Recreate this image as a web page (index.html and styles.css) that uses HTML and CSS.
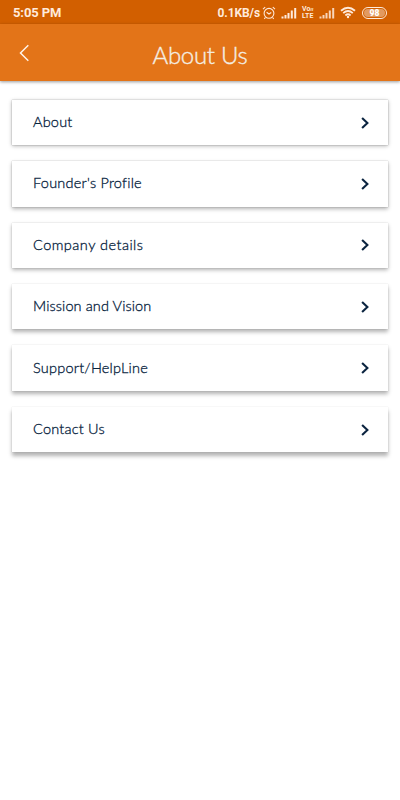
FILE: index.html
```html
<!DOCTYPE html>
<html lang="en">
<head>
<meta charset="utf-8">
<title>About Us</title>
<link rel="stylesheet" href="styles.css">
</head>
<body>
<div class="status">
  <span class="time">5:05 PM</span>
  <span class="rate">0.1KB/s</span>
  <svg class="alarm" width="14" height="14" viewBox="0 0 14 14"><circle cx="7" cy="7.3" r="4.9"/><path d="M1 3.2 3.2 1.2M10.8 1.2 13 3.2M3.4 11.5 2.3 12.8M10.6 11.5 11.7 12.8M4.6 6.2 7 8 9.3 6.5"/></svg>
  <svg class="signal" width="16" height="12" viewBox="0 0 16 12"><path d="M1.5 9.5V11.5M4.5 8V11.5M7.5 6V11.5M10.8 3.5V11.5M14.2 1V11.5"/></svg>
  <span class="volte"><span>Vo<i>ıı</i></span><span>LTE</span></span>
  <svg class="signal second" width="16" height="12" viewBox="0 0 16 12"><path d="M1.5 9.5V11.5M4.5 8V11.5M7.5 6V11.5M10.8 3.5V11.5M14.2 1V11.5"/></svg>
  <svg class="wifi" width="16" height="13" viewBox="0 0 16 13"><path d="M1 4.7Q8-1.3 15 4.7M3.2 7.1Q8 3 12.8 7.1M5.4 9.4Q8 7.3 10.6 9.4"/><circle cx="8" cy="11" r="1.2"/></svg>
  <span class="battery"><b>98</b></span>
</div>
<header class="bar">
  <svg class="back" width="12" height="20" viewBox="0 0 12 20"><path d="M9.3 2.2 1.5 10 9.3 17.8"/></svg>
  <h1>About Us</h1>
</header>
<main class="list">
  <a class="card c1"><span class="about">About</span><svg class="chev" width="10" height="14" viewBox="0 0 10 14"><path d="M2.1 1.9 7.4 7 2.1 12.1"/></svg></a>
  <a class="card c2"><span class="founder">Founder's Profile</span><svg class="chev" width="10" height="14" viewBox="0 0 10 14"><path d="M2.1 1.9 7.4 7 2.1 12.1"/></svg></a>
  <a class="card c3"><span class="company">Company details</span><svg class="chev" width="10" height="14" viewBox="0 0 10 14"><path d="M2.1 1.9 7.4 7 2.1 12.1"/></svg></a>
  <a class="card c4"><span class="mission">Mission and Vision</span><svg class="chev" width="10" height="14" viewBox="0 0 10 14"><path d="M2.1 1.9 7.4 7 2.1 12.1"/></svg></a>
  <a class="card c5"><span class="support">Support/HelpLine</span><svg class="chev" width="10" height="14" viewBox="0 0 10 14"><path d="M2.1 1.9 7.4 7 2.1 12.1"/></svg></a>
  <a class="card c6"><span class="contact">Contact Us</span><svg class="chev" width="10" height="14" viewBox="0 0 10 14"><path d="M2.1 1.9 7.4 7 2.1 12.1"/></svg></a>
</main>
</body>
</html>
```
FILE: styles.css
```css
* { box-sizing: border-box; }
body { margin: 0; height: 800px; overflow: hidden; background: #fff; font-family: Lato, sans-serif; }
svg { display: block; fill: none; flex: none; }
.status { height: 24px; background: #d25f00; color: #ffeadb; display: flex; align-items: center; padding: 1px 13px 0; font-family: Roboto, sans-serif; font-weight: 700; }
.time { font-size: 13px; letter-spacing: -.1px; margin-right: auto; }
.rate { font-size: 12px; letter-spacing: -.1px; margin-right: 2px; }
.alarm { stroke: #ffeadb; stroke-width: 1.1; }
.signal { stroke: #ffeadb; stroke-width: 2; margin-left: 5px; }
.second { margin-left: 4px; opacity: .85; }
.volte { width: 13px; margin-left: 5px; display: flex; flex-direction: column; font-size: 7px; line-height: 7px; letter-spacing: .1px; white-space: nowrap; }
.volte i { font-size: 5px; line-height: 5px; }
.wifi { stroke: #ffeadb; stroke-width: 1.9; margin-left: 5px; }
.wifi circle { fill: #ffeadb; stroke: none; }
.battery { width: 25px; height: 12px; margin-left: 6px; border: 1px solid #ffeadb; border-radius: 6px; padding: 1px; display: flex; }
.battery b { flex: 1; border-radius: 4px; background: #e29a5f; color: #fff; font-size: 8.5px; line-height: 8.5px; text-align: center; }
.bar { height: 57px; background: #e37418; box-shadow: 0 1px 3px rgba(0,0,0,.4); display: grid; grid-template-columns: 60px 1fr 60px; align-items: center; }
.back { margin-left: 19px; margin-top: 1px; stroke: #fff3e8; stroke-width: 1.5; }
h1 { margin: 5px 0 0; text-align: center; color: #f4eee3; font-size: 24px; line-height: 30px; font-weight: 300; letter-spacing: -.3px; -webkit-text-stroke: .35px #f4eee3; }
.list { display: flex; flex-direction: column; gap: 16px; padding: 18.9px 12px 0; }
.card { height: 45.4px; background: #fff; display: flex; align-items: center; justify-content: space-between; padding: 0 18px 0 21px; color: #06223d; font-size: 14.5px; line-height: 20px; font-weight: 300; -webkit-text-stroke: .3px #06223d; }
.card span { margin-top: -1px; white-space: nowrap; }
.chev { stroke: #0b2440; stroke-width: 2.1; }
.c1 { box-shadow: 0 0 1px rgba(0,0,0,.35), 0 1px 4px rgba(0,0,0,.3); }
.c2 { box-shadow: 0 0 1px rgba(0,0,0,.3), 0 1.5px 4px rgba(0,0,0,.3); }
.c3 { box-shadow: 0 0 1px rgba(0,0,0,.2), 0 2px 4px rgba(0,0,0,.3); }
.c4 { box-shadow: 0 0 1px rgba(0,0,0,.17), 0 2.5px 4px rgba(0,0,0,.3); }
.c5 { box-shadow: 0 0 1px rgba(0,0,0,.15), 0 3px 4px rgba(0,0,0,.3); }
.c6 { box-shadow: 0 0 1px rgba(0,0,0,.15), 0 3.5px 4px rgba(0,0,0,.3); }
.about { letter-spacing: .2px; }
.founder { letter-spacing: .23px; }
.company { letter-spacing: .48px; }
.mission { letter-spacing: .11px; }
.support { letter-spacing: .23px; }
.contact { letter-spacing: .22px; }
```
